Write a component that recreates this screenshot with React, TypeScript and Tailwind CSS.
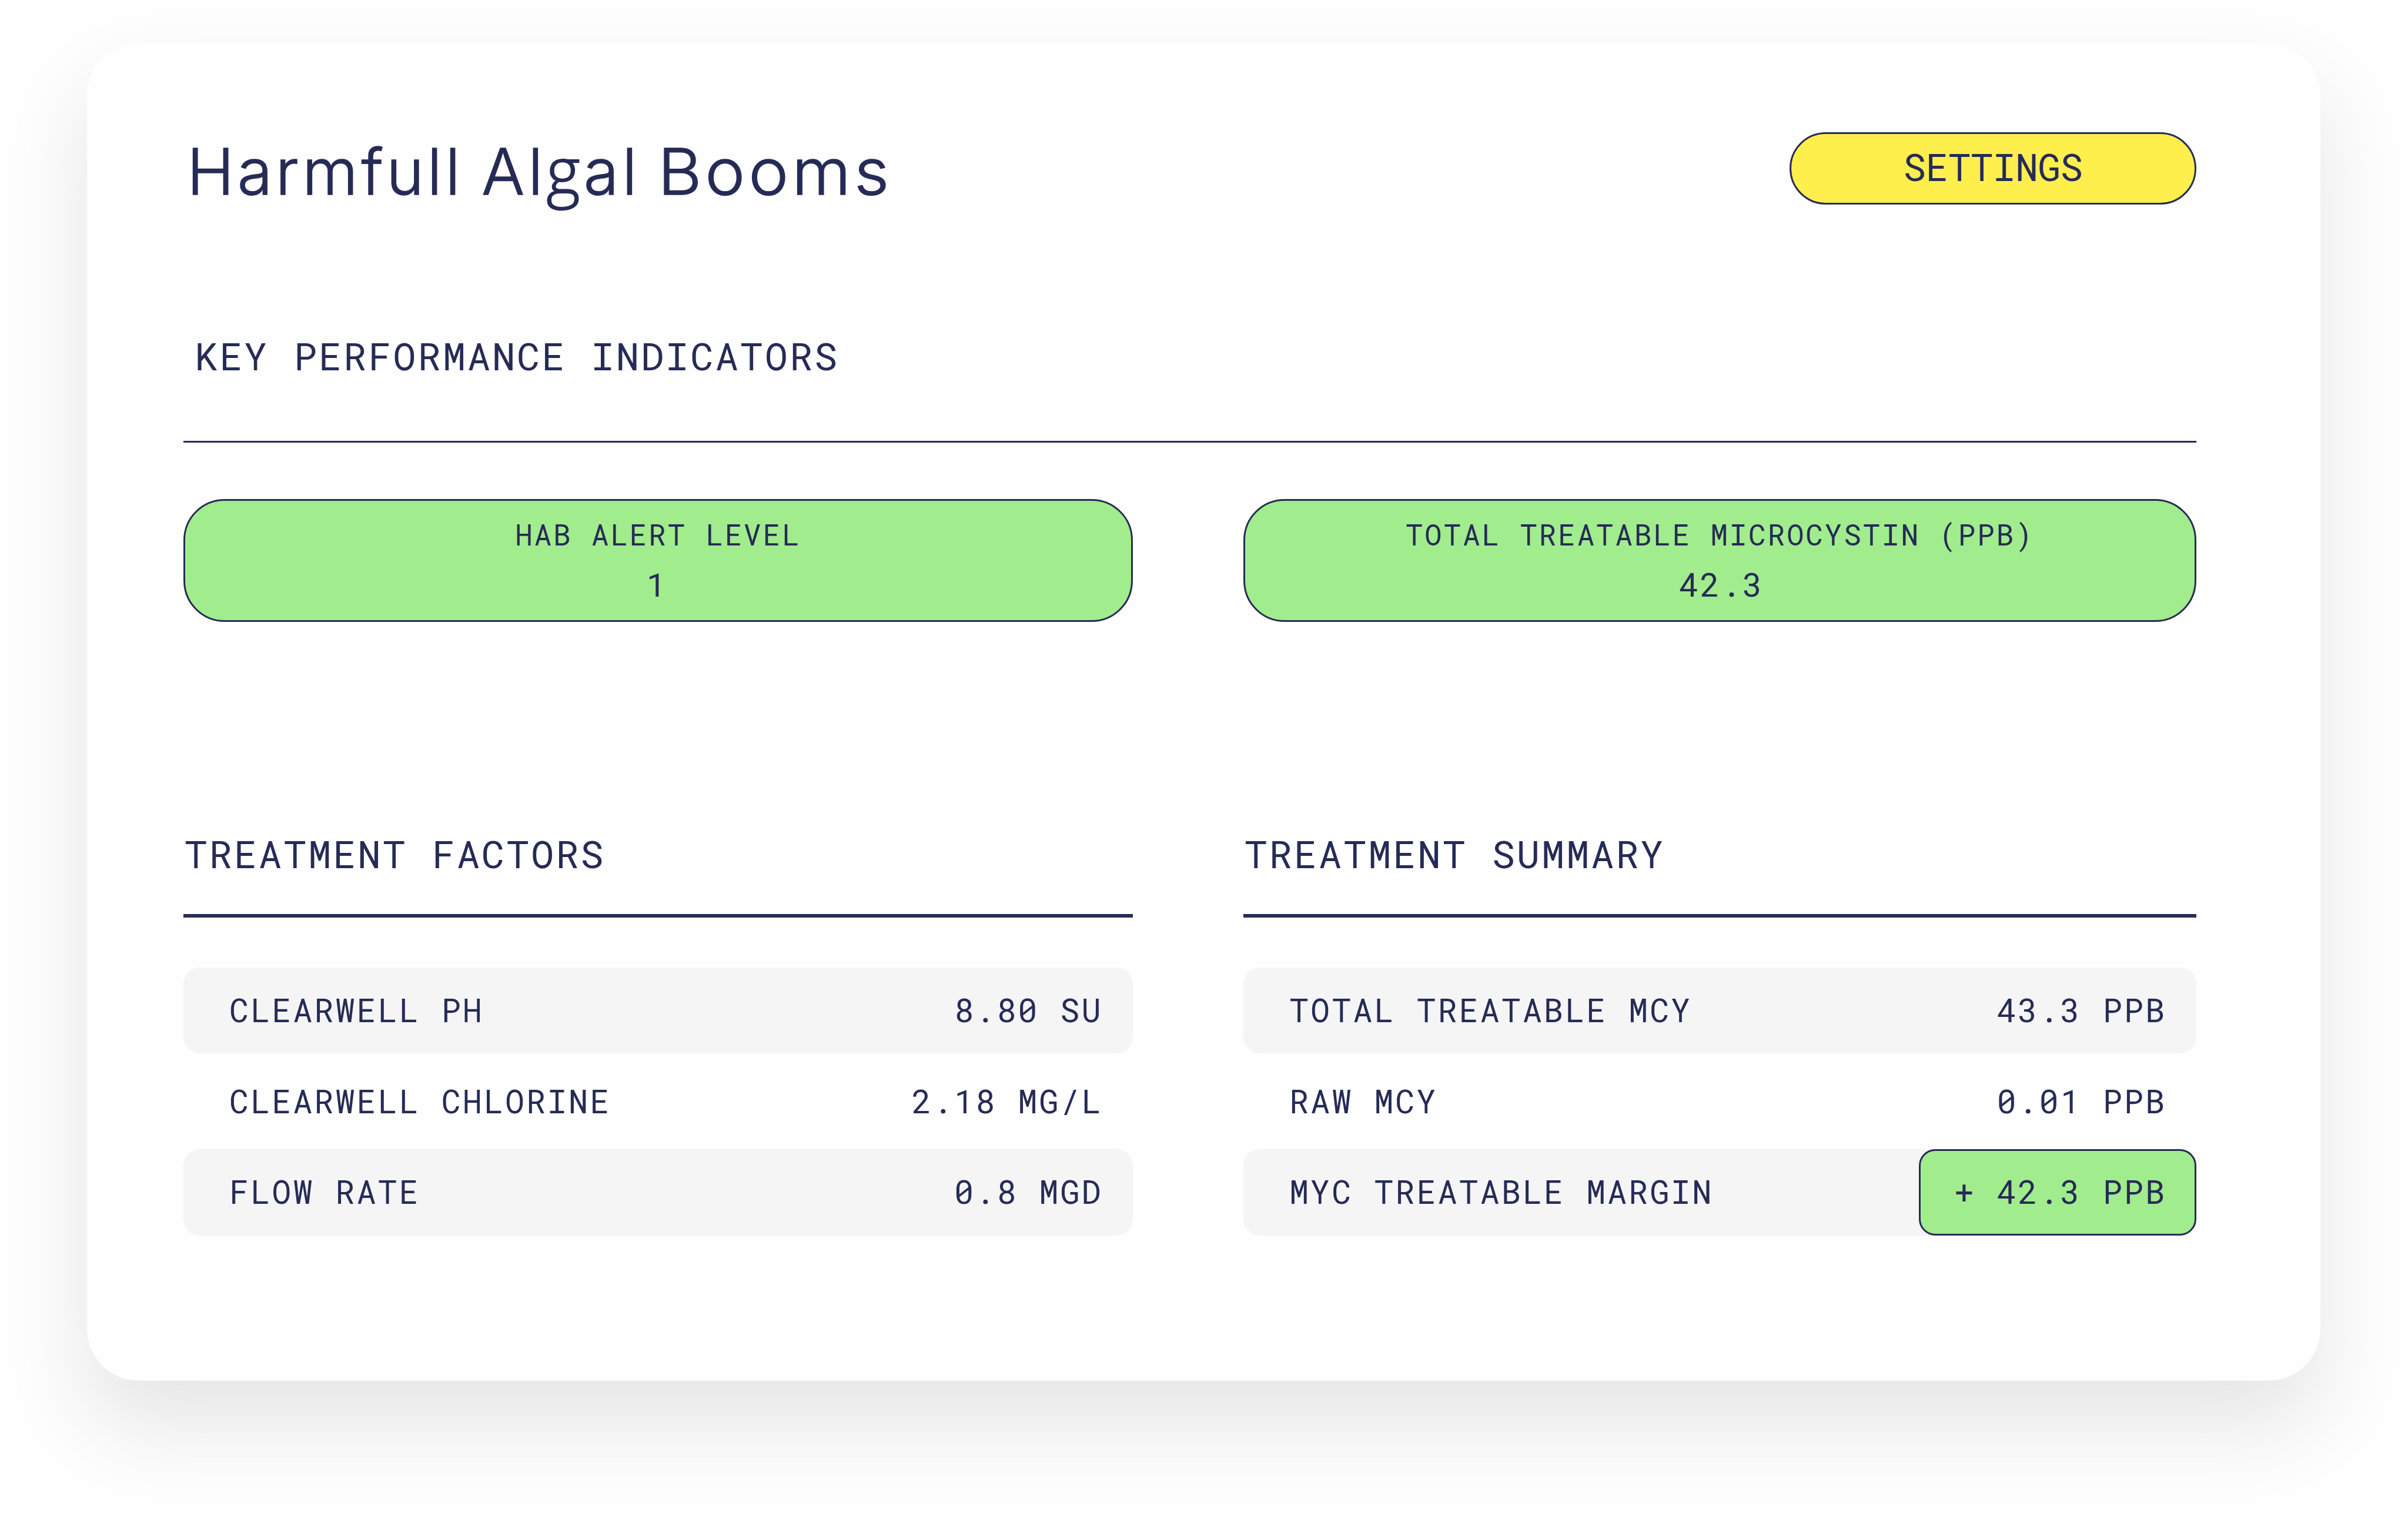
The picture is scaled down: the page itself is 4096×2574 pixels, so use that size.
type Metric = { label: string; value: string; highlight?: boolean };

const factors: Metric[] = [
  { label: 'CLEARWELL PH', value: '8.80 SU' },
  { label: 'CLEARWELL CHLORINE', value: '2.18 MG/L' },
  { label: 'FLOW RATE', value: '0.8 MGD' },
];

const summary: Metric[] = [
  { label: 'TOTAL TREATABLE MCY', value: '43.3 PPB' },
  { label: 'RAW MCY', value: '0.01 PPB' },
  { label: 'MYC TREATABLE MARGIN', value: '+ 42.3 PPB', highlight: true },
];

function KpiCard({ label, value, nudge }: { label: string; value: string; nudge: string }) {
  return (
    <div className="flex h-[209px] flex-col items-center rounded-[70px] border-[3px] border-[#262b56] bg-[#a1ec8c] pt-[27px]">
      <div className="text-[49.6px] leading-[60px] tracking-[2.65px]">{label}</div>
      <div className={`mt-[25px] text-[55.8px] leading-[60px] tracking-[2.7px] ${nudge}`}>{value}</div>
    </div>
  );
}

function MetricRow({ metric, shaded }: { metric: Metric; shaded: boolean }) {
  return (
    <li className={`flex h-[146.4px] items-center justify-between rounded-[28px] pl-[78px] text-[55.2px] leading-[60px] tracking-[2.95px] ${shaded ? 'bg-[#f5f5f5]' : ''}`}>
      <span className="pb-[2px]">{metric.label}</span>
      {metric.highlight ? (
        <span className="flex h-full w-[472px] items-center justify-end rounded-[28px] border-[3px] border-[#262b56] bg-[#a1ec8c] pr-[48px] pb-[2px]">{metric.value}</span>
      ) : (
        <span className="pr-[51px] pb-[2px]">{metric.value}</span>
      )}
    </li>
  );
}

function MetricSection({ title, metrics }: { title: string; metrics: Metric[] }) {
  return (
    <section>
      <h2 className="pl-[1.5px] text-[65.6px] leading-[80px] tracking-[2.75px]">{title}</h2>
      <div className="mt-[63px] h-[6px] bg-[#262b56]" />
      <ul className="mt-[84.6px] flex flex-col gap-[8.4px]">
        {metrics.map((m, i) => (
          <MetricRow key={m.label} metric={m} shaded={i % 2 === 0} />
        ))}
      </ul>
    </section>
  );
}

export default function App() {
  return (
    <main className="h-[2574px] w-[4096px] overflow-hidden bg-[#fefefe] pt-[73px] pl-[148px] font-['Roboto_Mono','Noto_Sans_Mono','Liberation_Mono',monospace] text-[#262b56]">
      <div className="h-[2276px] w-[3799px] rounded-[88px] bg-[#fefefe] pt-[152px] pr-[211px] pl-[164px] shadow-[0_75px_150px_rgba(0,0,0,0.1)]">
        <header className="flex h-[123px] items-start justify-between">
          <h1 className="flex pt-[6px] pl-[6px] font-['Inter','Open_Sans',sans-serif] text-[108.4px] leading-[122px] font-light [-webkit-text-stroke:1.3px_#262b56]">
            <span className="tracking-[5.5px]">Harmfull</span>
            <span className="ml-[31px] tracking-[6px]">
              Al<span className="font-['Open_Sans','Noto_Sans'] text-[110px] leading-[0px] [-webkit-text-stroke:1.8px_#262b56]">g</span>al
            </span>
            <span className="ml-[29px] origin-left scale-x-[1.06] tracking-[5.4px]">Booms</span>
          </h1>
          <button className="h-[123px] w-[692px] rounded-full border-[3px] border-[#262b56] bg-[#ffef4d] pb-[8px] text-[64.4px] leading-[80px] tracking-[-0.5px]">
            SETTINGS
          </button>
        </header>

        <section className="mt-[217px]">
          <h2 className="pl-[19px] text-[65.6px] leading-[80px] tracking-[2.8px]">KEY PERFORMANCE INDICATORS</h2>
          <div className="mt-[104.5px] h-[3px] bg-[#262b56]" />
          <div className="mt-[96.5px] grid grid-cols-[1614.5px_1621px] justify-between">
            <KpiCard label="HAB ALERT LEVEL" value="1" nudge="pr-[4px]" />
            <KpiCard label="TOTAL TREATABLE MICROCYSTIN (PPB)" value="42.3" nudge="pl-[5px]" />
          </div>
        </section>

        <div className="mt-[354px] grid grid-cols-[1614.5px_1621px] justify-between">
          <MetricSection title="TREATMENT FACTORS" metrics={factors} />
          <MetricSection title="TREATMENT SUMMARY" metrics={summary} />
        </div>
      </div>
    </main>
  );
}
